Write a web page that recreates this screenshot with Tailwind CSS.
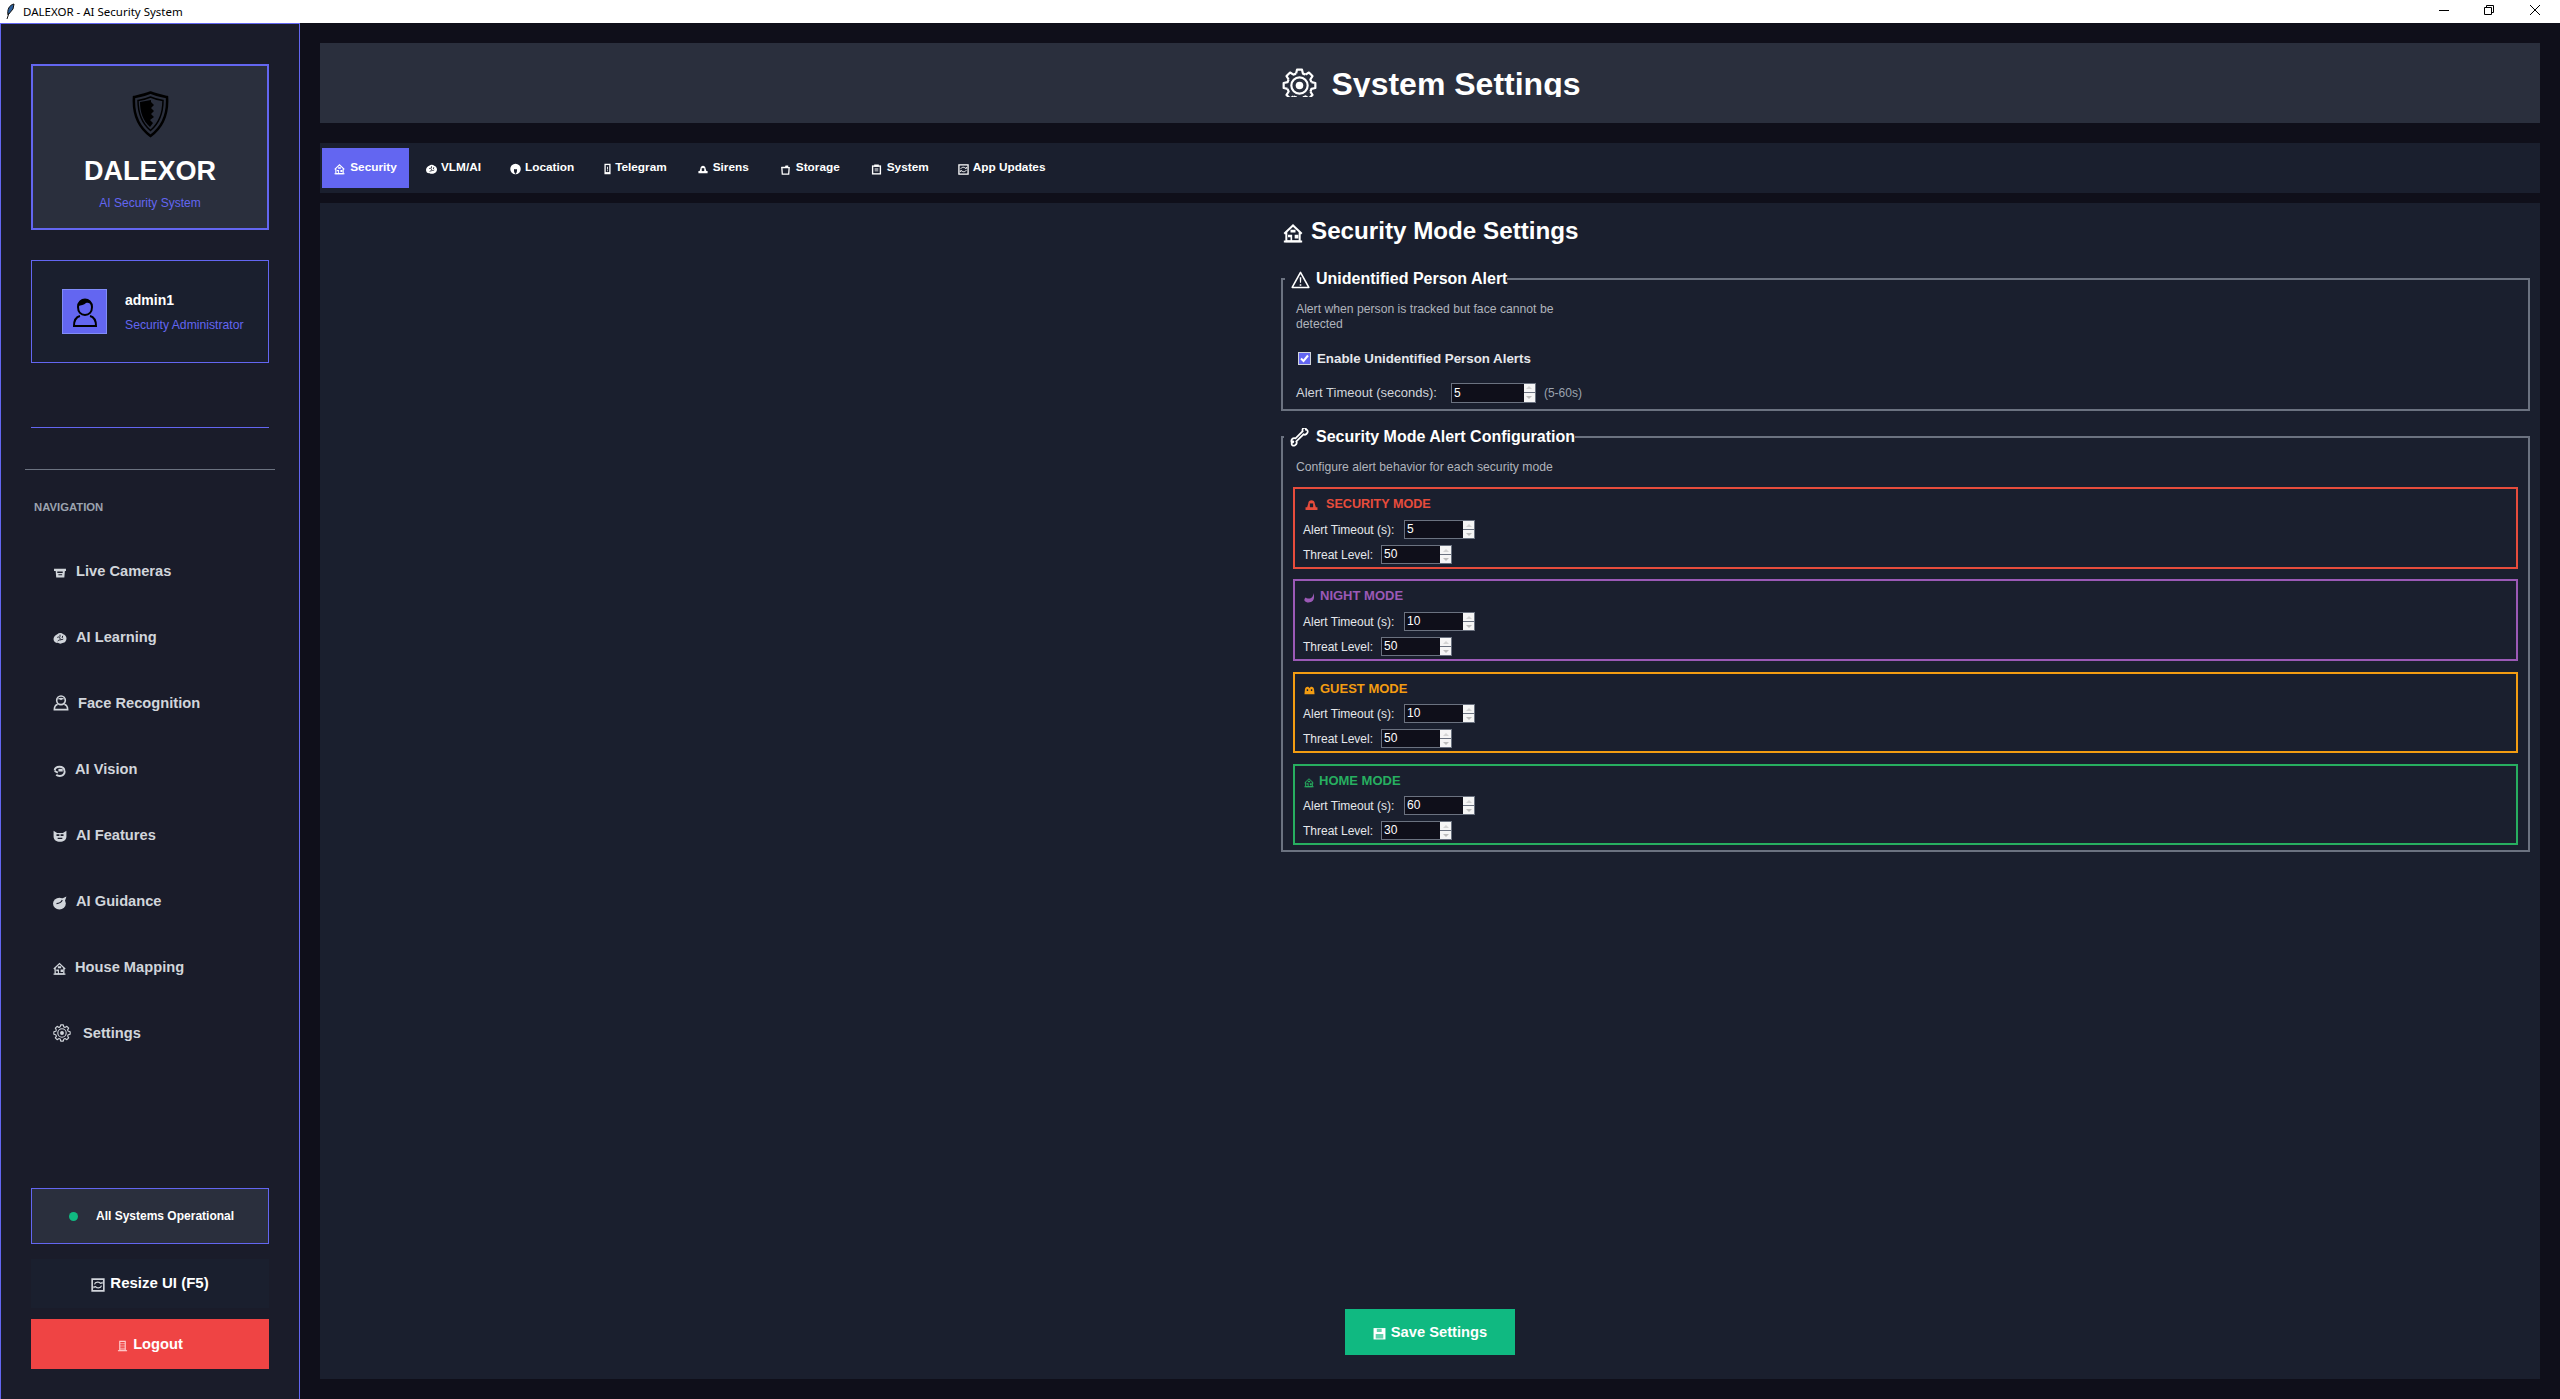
<!DOCTYPE html>
<html lang="en">
  <head>
    <meta charset="UTF-8" />
    <title>DALEXOR - AI Security System</title>
    <script src="https://cdn.jsdelivr.net/npm/@tailwindcss/browser@4"></script>
  </head>
  <body class="bg-[#0f0f1a] font-['Liberation_Sans',Arial,sans-serif] text-white overflow-hidden">
    <!-- Icons -->
    <svg class="hidden">
      <symbol id="i-gear" viewBox="0 0 24 24">
        <g transform="translate(12 12)" fill="none" stroke="currentColor" stroke-width="1.500" stroke-linejoin="round">
          <path id="tooth" d="M-2.340-8.170-1.720-10.860H1.720L2.340-8.170A8.500 8.500 0 0 1 4.120-7.430" />
          <use href="#tooth" transform="rotate(45)" />
          <use href="#tooth" transform="rotate(90)" />
          <use href="#tooth" transform="rotate(135)" />
          <use href="#tooth" transform="rotate(180)" />
          <use href="#tooth" transform="rotate(225)" />
          <use href="#tooth" transform="rotate(270)" />
          <use href="#tooth" transform="rotate(315)" />
          <circle r="5.600" />
          <circle r="2.600" fill="currentColor" stroke="none" />
        </g>
      </symbol>
      <symbol id="i-house" viewBox="0 0 24 24"><path fill="none" stroke="currentColor" stroke-width="2.400" d="M1.500 13 12 3l10.500 10M4 11v11h16V11"/><path fill="currentColor" d="M9 8h6v3.500H9zM6 14h5v8H9v-5H6zM14 14h4.500v4.500H14zM1 21h22v2.500H1z"/></symbol>
      <symbol id="i-camera" viewBox="0 0 24 24"><path fill="currentColor" d="M1 5h22v4h-2l-1 12H5L4 9H1z"/><path fill="#1a1c2a" d="M7 10h10v3H7zM9 15h7v2H9z"/></symbol>
      <symbol id="i-brain" viewBox="0 0 24 24"><path fill="currentColor" d="M7 4c3-3 8-3 11 0 3 1 6 4 6 8s-3 8-6 8c-3 2-8 2-10 0-4 1-8-2-8-7 0-4 4-8 7-9z"/><path fill="none" stroke="#1a1c2a" stroke-width="1.800" d="M7 10c3-2 5 0 5 2s3 3 6 1M12 5v4M8 17c1-2 3-3 5-2M17 7l-1 4"/></symbol>
      <symbol id="i-face" viewBox="0 0 24 24"><circle cx="12" cy="8" r="6.500" fill="none" stroke="currentColor" stroke-width="2.400"/><path fill="currentColor" d="M6 7c2-4 10-4 12 0-3-1-4-1-6 1-2-2-3-2-6-1z"/><path fill="none" stroke="currentColor" stroke-width="2.400" d="M7 14c-3 1-5 3-5 8h20c0-5-2-7-5-8"/></symbol>
      <symbol id="i-vision" viewBox="0 0 24 24"><path fill="none" stroke="currentColor" stroke-width="3.500" d="M3 11c1-9 17-9 18 0 1 3 0 6-2 8-3 3-10 3-13 0M3 12l6 3"/><path fill="currentColor" d="M10 8h8v5h-8z"/></symbol>
      <symbol id="i-mask" viewBox="0 0 24 24"><path fill="currentColor" d="M1 3l6 4h10l6-4v10c0 6-5 9-11 9S1 19 1 13z"/><path fill="#1a1c2a" d="M6 9h5v3H6zM13 9h5v3h-5zM8 15h8v2H8z"/></symbol>
      <symbol id="i-guide" viewBox="0 0 24 24"><ellipse cx="11" cy="13" rx="11" ry="10" fill="currentColor"/><path fill="none" stroke="#1a1c2a" stroke-width="2" d="M6 13c3 0 8-2 10-6"/><path fill="currentColor" d="M14 5l9-4-3 9z"/></symbol>
      <symbol id="i-door" viewBox="0 0 24 24"><path fill="none" stroke="currentColor" stroke-width="2.500" d="M6 2h12v19H6z"/><path fill="none" stroke="currentColor" stroke-width="1.500" d="M6 7h12M6 12h12M6 17h12"/><path fill="currentColor" d="M2 21h20v2.500H2z"/></symbol>
      <symbol id="i-resize" viewBox="0 0 24 24"><path fill="none" stroke="currentColor" stroke-width="2.800" d="M2 2h20v20H2z"/><path fill="none" stroke="currentColor" stroke-width="2" d="M6 11c1-5 9-5 11-1M18 13c-1 5-9 5-11 1"/><path fill="currentColor" d="M14 10h6V6zM10 14H4v4z"/></symbol>
      <symbol id="i-globe" viewBox="0 0 24 24"><circle cx="12" cy="12" r="11.500" fill="currentColor"/><path fill="#1a1f2e" d="M12 23c-3-3-4-7-3-11 2 1 5 1 6 0 1 4 0 8-3 11z"/></symbol>
      <symbol id="i-phone" viewBox="0 0 16 24"><path fill="currentColor" d="M1 0h14v24H1z"/><path fill="#1a1f2e" d="M4 3h8v16H4z"/><path fill="currentColor" d="M7 7h2v6H7zM7 15h2v2H7z"/></symbol>
      <symbol id="i-siren" viewBox="0 0 24 24"><path fill="currentColor" d="M6 10C6 2 18 2 18 10l2 7h3v5H1v-5h3z"/><path fill="#1a1f2e" d="M9 10h6v7H9z"/></symbol>
      <symbol id="i-folder" viewBox="0 0 24 24"><path fill="none" stroke="currentColor" stroke-width="2.800" d="M4 8h16l-1 14H5z"/><path fill="currentColor" d="M3 6h8l1-3h6v5H3z"/></symbol>
      <symbol id="i-clip" viewBox="0 0 24 24"><path fill="currentColor" d="M2 3h20v20H2z"/><path fill="#1a1f2e" d="M5 6h14v14H5z"/><path fill="currentColor" d="M7 1h10v5H7zM8 10h8v2H8zM8 14h8v2H8z"/></symbol>
      <symbol id="i-warn" viewBox="0 0 24 24"><path fill="none" stroke="currentColor" stroke-width="2" stroke-linejoin="round" d="M12 3 1.500 22h21z"/><path fill="currentColor" d="M11 9h2l-.3 7h-1.400zM11 18h2v2h-2z"/></symbol>
      <symbol id="i-wrench" viewBox="0 0 24 24"><path fill="none" stroke="currentColor" stroke-width="2.200" d="M20 2c2 0 3 2 2 4s-3 3-5 2L8 17c1 2 0 4-2 5s-4 0-4-2 1-1 2-2-1-2-2 0c-1-3 1-6 5-5l9-9c-1-3 1-5 4-4z"/></symbol>
      <symbol id="i-moon" viewBox="0 0 24 24"><path fill="currentColor" d="M20 2c1 8-4 13-12 12-2 0-3-1-4-2-2 1-4 4-3 7 3 4 9 5 14 3 7-3 9-12 5-20z"/></symbol>
      <symbol id="i-guests" viewBox="0 0 24 24"><path fill="currentColor" d="M2 10c0-8 9-8 10-3 1-5 10-5 10 3l1 10H1z"/><path fill="#1a1f2e" d="M6 9h3v4H6zM15 9h3v4h-3z"/></symbol>
      <symbol id="i-save" viewBox="0 0 24 24"><path fill="currentColor" d="M1 2h22v21H1z"/><path fill="#10b981" fill-opacity=".65" d="M5 13h14v8H5zM7 3h9v6H7z"/></symbol>
    </svg>

    <!-- Title bar -->
    <div class="h-[23px] bg-white flex items-center text-black">
      <svg class="w-[9px] h-[17px] ml-[6px]" viewBox="0 0 9 17">
        <path fill="#2b5f9c" stroke="#111" stroke-width="1" d="M8 1C3 2 1 7 2 12l5-6z" />
        <path stroke="#111" stroke-width="1" d="M3 10 1 16" />
      </svg>
      <span class="ml-[8px] text-[11.5px] font-['Noto_Sans',sans-serif]">DALEXOR - AI Security System</span>
      <div class="ml-auto mb-[3px] flex items-center">
        <span class="block w-[10px] h-px bg-black mr-[35px]"></span>
        <svg class="w-[10px] h-[10px] mr-[36px]" viewBox="0 0 10 10"><path fill="none" stroke="#000" d="M.5 2.500h7v7h-7zM2.500 2.500v-2h7v7h-2" /></svg>
        <svg class="w-[10px] h-[10px] mr-[20px]" viewBox="0 0 10 10"><path stroke="#000" d="M0 0l10 10M10 0 0 10" /></svg>
      </div>
    </div>

    <div class="flex h-[1376px]">
      <!-- Sidebar -->
      <aside class="w-[300px] shrink-0 bg-[#1a1c2a] border border-b-0 border-[#6366f1] pt-[40px] px-[30px] flex flex-col">
        <div class="h-[166px] bg-[#2a2f3d] border-2 border-[#6366f1] flex flex-col items-center pt-[25px]">
          <svg class="w-[37px] h-[47px]" viewBox="0 0 37 47">
            <path fill="none" stroke="#000" stroke-width="2.500" d="M18.500 1.500C13 4 7 5 2 6c-1 15 3 29 16.500 39C32 35 36 21 35 6c-5-1-11-2-16.500-4.500z" />
            <path fill="none" stroke="#000" stroke-width="1.500" d="M18.500 6C14 8 10 9 6 9.500c0 12 3 22 12.500 30C28 31.500 31 21 31 9.500 27 9 23 8 18.500 6z" />
            <path fill="#000" d="M19 9 8 11c0 10 3 19 10 25l3-4-3-3 4-3-3-3 3-3-3-3 3-3-3-3z" />
          </svg>
          <div class="text-[27px] leading-[31px] font-bold mt-[18px]">DALEXOR</div>
          <div class="text-[12px] leading-[14px] text-[#6366f1] mt-[9px]">AI Security System</div>
        </div>

        <div class="h-[103px] mt-[30px] bg-[#1a1f2e] border border-[#6366f1] flex items-center pl-[30px]">
          <div class="w-[45px] h-[45px] bg-[#6366f1] border border-[#818cf8] flex items-center justify-center">
            <svg class="w-[26px] h-[32px]" viewBox="0 0 26 32">
              <path fill="none" stroke="#000" stroke-width="2" d="M6 11c0-10 14-10 14 0 0 5-3 8-7 8s-7-3-7-8z" />
              <path fill="#000" d="M6 10C6 1 20 1 20 10c-2-3-4-4-6-3-2 2-5 2-8 3z" />
              <path fill="none" stroke="#000" stroke-width="2" d="M8 20c-4 1-6 4-6 10h22c0-6-2-9-6-10" />
            </svg>
          </div>
          <div class="ml-[18px]">
            <div class="text-[14px] leading-[16px] font-bold">admin1</div>
            <div class="text-[12.2px] leading-[14px] text-[#6366f1] mt-[10px]">Security Administrator</div>
          </div>
        </div>

        <div class="h-px bg-[#6366f1] mt-[64px]"></div>
        <div class="h-px bg-[#6b7280] mt-[41px] -mx-[6px]"></div>

        <div class="text-[11.3px] leading-[13px] font-bold text-[#9ca3af] mt-[31px] ml-[3px]">NAVIGATION</div>

        <nav class="mt-[24px] flex flex-col text-[14.67px] font-bold text-[#d1d5db]">
          <a class="h-[66px] flex items-center pl-[22px]"><svg class="w-[14px] h-[13px] mt-[3px] mr-[9px]"><use href="#i-camera" /></svg>Live Cameras</a>
          <a class="h-[66px] flex items-center pl-[22px]"><svg class="w-[14px] h-[13px] mt-[3px] mr-[9px]"><use href="#i-brain" /></svg>AI Learning</a>
          <a class="h-[66px] flex items-center pl-[22px]"><svg class="w-[16px] h-[16px] mr-[9px]"><use href="#i-face" /></svg>Face Recognition</a>
          <a class="h-[66px] flex items-center pl-[22px]"><svg class="w-[13px] h-[14px] mt-[3px] mr-[9px]"><use href="#i-vision" /></svg>AI Vision</a>
          <a class="h-[66px] flex items-center pl-[22px]"><svg class="w-[14px] h-[14px] mt-[2px] mr-[9px]"><use href="#i-mask" /></svg>AI Features</a>
          <a class="h-[66px] flex items-center pl-[22px]"><svg class="w-[14px] h-[14px] mt-[3px] mr-[9px]"><use href="#i-guide" /></svg>AI Guidance</a>
          <a class="h-[66px] flex items-center pl-[22px]"><svg class="w-[13px] h-[13px] mt-[3px] mr-[9px]"><use href="#i-house" /></svg>House Mapping</a>
          <a class="h-[66px] flex items-center pl-[22px]"><svg class="w-[18px] h-[18px] mr-[12px]"><use href="#i-gear" /></svg>Settings</a>
        </nav>

        <div class="mt-auto mb-[30px]">
          <div class="h-[56px] bg-[#2a2f3d] border border-[#6366f1] flex items-center pl-[37px]">
            <span class="block w-[9px] h-[9px] rounded-full bg-[#10b981] mr-[18px] mt-[1px]"></span>
            <span class="text-[12px] font-bold">All Systems Operational</span>
          </div>
          <button class="w-full h-[49px] mt-[15px] bg-[#1a1f2e] text-[15px] font-bold flex items-center justify-center">
            <svg class="w-[14px] h-[14px] mt-[3px] mr-[5px] text-[#d1d5db]"><use href="#i-resize" /></svg>Resize UI (F5)
          </button>
          <button class="w-full h-[50px] mt-[11px] bg-[#ef4444] text-[14.7px] font-bold flex items-center justify-center">
            <svg class="w-[11px] h-[14px] mt-[3px] mr-[5px] text-[#fecaca]"><use href="#i-door" /></svg>Logout
          </button>
        </div>
      </aside>

      <!-- Main -->
      <main class="flex-1 pl-[20px] pr-[20px] pt-[20px] pb-[20px] flex flex-col">
        <div class="h-[80px] shrink-0 bg-[#2a2f3d] flex justify-center items-start pt-[25px]">
          <div class="h-[29px] overflow-hidden flex items-start">
            <svg class="w-[35px] h-[35px] ml-[2px] mr-[15px] shrink-0"><use href="#i-gear" /></svg>
            <span class="text-[32px] leading-[37px] font-bold -mt-[2px]">System Settings</span>
          </div>
        </div>

        <!-- Tabs -->
        <div class="h-[50px] shrink-0 mt-[20px] bg-[#1a1f2e] flex items-center pl-[2px] text-[11.8px] font-bold">
          <a class="h-[40px] w-[87px] bg-[#6366f1] flex items-center justify-center"><svg class="w-[11px] h-[12px] mt-[2px] mr-[5px]"><use href="#i-house" /></svg>Security</a>
          <a class="ml-[17px] flex items-center"><svg class="w-[11px] h-[11px] mt-[2px] mr-[4px]"><use href="#i-brain" /></svg>VLM/AI</a>
          <a class="ml-[29px] flex items-center"><svg class="w-[11px] h-[12px] mt-[2px] mr-[4px]"><use href="#i-globe" /></svg>Location</a>
          <a class="ml-[30px] flex items-center"><svg class="w-[7px] h-[14px] mt-[2px] mr-[4px]"><use href="#i-phone" /></svg>Telegram</a>
          <a class="ml-[31px] flex items-center"><svg class="w-[10px] h-[10px] mt-[2px] mr-[5px]"><use href="#i-siren" /></svg>Sirens</a>
          <a class="ml-[31px] flex items-center"><svg class="w-[11px] h-[11px] mt-[2px] mr-[5px]"><use href="#i-folder" /></svg>Storage</a>
          <a class="ml-[31px] flex items-center"><svg class="w-[11px] h-[13px] mt-[2px] mr-[5px]"><use href="#i-clip" /></svg>System</a>
          <a class="ml-[29px] flex items-center"><svg class="w-[11px] h-[13px] mt-[2px] mr-[4px]"><use href="#i-resize" /></svg>App Updates</a>
        </div>

        <!-- Panel -->
        <section class="flex-1 mt-[10px] bg-[#1a1f2e] pl-[961px] pr-[10px] pt-[14px] flex flex-col">
          <h2 class="text-[24.2px] leading-[28px] font-bold flex items-center">
            <svg class="w-[20px] h-[20px] mt-[4px] ml-[2px] mr-[8px]"><use href="#i-house" /></svg>Security Mode Settings
          </h2>

          <fieldset class="mt-[23px] h-[143px] border-2 border-[#6b7280] px-[13px] min-w-0">
            <legend class="ml-[-11px] pl-[6px] h-[22px] text-[16px] leading-[22px] font-bold flex items-center">
              <svg class="w-[19px] h-[19px] mr-[6px]"><use href="#i-warn" /></svg>Unidentified Person Alert
            </legend>
            <p class="text-[12.2px] leading-[15px] text-[#b0b4bc] w-[270px] mt-[12px]">Alert when person is tracked but face cannot be detected</p>
            <label class="flex items-center mt-[17px] ml-[2px]">
              <span class="w-[13px] h-[13px] bg-[#6366f1] border border-[#d1d5db] flex items-center justify-center">
                <svg class="w-[9px] h-[9px]" viewBox="0 0 9 9"><path fill="none" stroke="#fff" stroke-width="2" d="M1 4.500 3.500 7 8 1.500" /></svg>
              </span>
              <span class="ml-[6px] text-[13.3px] font-bold text-[#e5e7eb]">Enable Unidentified Person Alerts</span>
            </label>
            <div class="flex items-center mt-[14px] text-[13px] text-[#d1d5db]">
              <span>Alert Timeout (seconds):</span>
              <div class="ml-[14px] w-[85px] h-[20px] bg-[#0f0f1a] border border-[#6b7280] flex text-[12px] text-white">
                <span class="flex-1 pl-[2px] leading-[18px]">5</span>
                <span class="w-[11px] flex flex-col">
                  <span class="h-[8px] bg-[#f5f5f5] flex items-center justify-center"><span class="border-x-[3px] border-x-transparent border-b-[3px] border-b-[#d4d4d4]"></span></span>
                  <span class="h-px bg-[#6b7280]"></span>
                  <span class="h-[9px] bg-[#f5f5f5] flex items-center justify-center"><span class="border-x-[3px] border-x-transparent border-t-[3px] border-t-[#bdbdbd]"></span></span>
                </span>
              </div>
              <span class="ml-[8px] text-[12px] text-[#9ca3af]">(5-60s)</span>
            </div>
          </fieldset>

          <fieldset class="mt-[15px] h-[426px] border-2 border-[#6b7280] px-[10px] min-w-0">
            <legend class="ml-[-9px] pl-[6px] h-[22px] text-[16px] leading-[22px] font-bold flex items-center">
              <svg class="w-[19px] h-[19px] mr-[7px]"><use href="#i-wrench" /></svg>Security Mode Alert Configuration
            </legend>
            <p class="text-[12.2px] leading-[15px] text-[#b0b4bc] ml-[3px] mt-[12px]">Configure alert behavior for each security mode</p>

            <!-- Mode cards -->
            <div id="modeCards" class="mt-[12px] flex flex-col gap-[10px]"></div>
          </fieldset>

          <div class="mt-auto mb-[24px] -ml-[961px] -mr-[10px] flex justify-center">
            <button class="w-[170px] h-[46px] bg-[#10b981] text-[14.7px] font-bold flex items-center justify-center">
              <svg class="w-[13px] h-[13px] mt-[2px] mr-[5px]"><use href="#i-save" /></svg>Save Settings
            </button>
          </div>
        </section>
      </main>
    </div>

    <script>
      const modes = [
        { card: "h-[82px] border-[#e74c3c]", title: "text-[12.6px] text-[#e74c3c]", icon: "w-[15px] h-[13px] mr-[7px]", href: "#i-siren", name: "SECURITY MODE", gap: "mt-[6px]", timeout: 5, threat: 50 },
        { card: "h-[82px] border-[#9b59b6]", title: "text-[13px] text-[#9b59b6]", icon: "w-[11px] h-[11px] mt-[3px] mr-[5px]", href: "#i-moon", name: "NIGHT MODE", gap: "mt-[6px]", timeout: 10, threat: 50 },
        { card: "h-[81px] mt-[1px] border-[#f39c12]", title: "text-[13px] text-[#f39c12]", icon: "w-[11px] h-[11px] mt-[3px] mr-[5px]", href: "#i-guests", name: "GUEST MODE", gap: "mt-[5px]", timeout: 10, threat: 50 },
        { card: "h-[81px] mt-[1px] border-[#27ae60]", title: "text-[13px] text-[#27ae60]", icon: "w-[10px] h-[11px] mt-[3px] mr-[5px]", href: "#i-house", name: "HOME MODE", gap: "mt-[5px]", timeout: 60, threat: 30 },
      ];

      function spinbox(value) {
        return `
          <div class="w-[71px] h-[19px] bg-[#0f0f1a] border border-[#6b7280] flex text-white">
            <span class="flex-1 pl-[2px] leading-[17px]">${value}</span>
            <span class="w-[11px] flex flex-col">
              <span class="h-[8px] bg-[#f5f5f5] flex items-center justify-center"><span class="border-x-[3px] border-x-transparent border-b-[3px] border-b-[#d4d4d4]"></span></span>
              <span class="h-px bg-[#6b7280]"></span>
              <span class="h-[8px] bg-[#f5f5f5] flex items-center justify-center"><span class="border-x-[3px] border-x-transparent border-t-[3px] border-t-[#bdbdbd]"></span></span>
            </span>
          </div>`;
      }

      document.getElementById("modeCards").innerHTML = modes
        .map(
          (m) => `
          <div class="${m.card} border-2 pl-[8px] pt-[5px]">
            <div class="${m.title} h-[20px] flex items-center font-bold">
              <svg class="${m.icon} ml-[1px]"><use href="${m.href}" /></svg>${m.name}
            </div>
            <div class="${m.gap} flex items-center text-[12px] text-[#e5e7eb]">
              <span class="w-[101px]">Alert Timeout (s):</span>${spinbox(m.timeout)}
            </div>
            <div class="mt-[6px] flex items-center text-[12px] text-[#e5e7eb]">
              <span class="w-[78px]">Threat Level:</span>${spinbox(m.threat)}
            </div>
          </div>`
        )
        .join("");
    </script>
  </body>
</html>
